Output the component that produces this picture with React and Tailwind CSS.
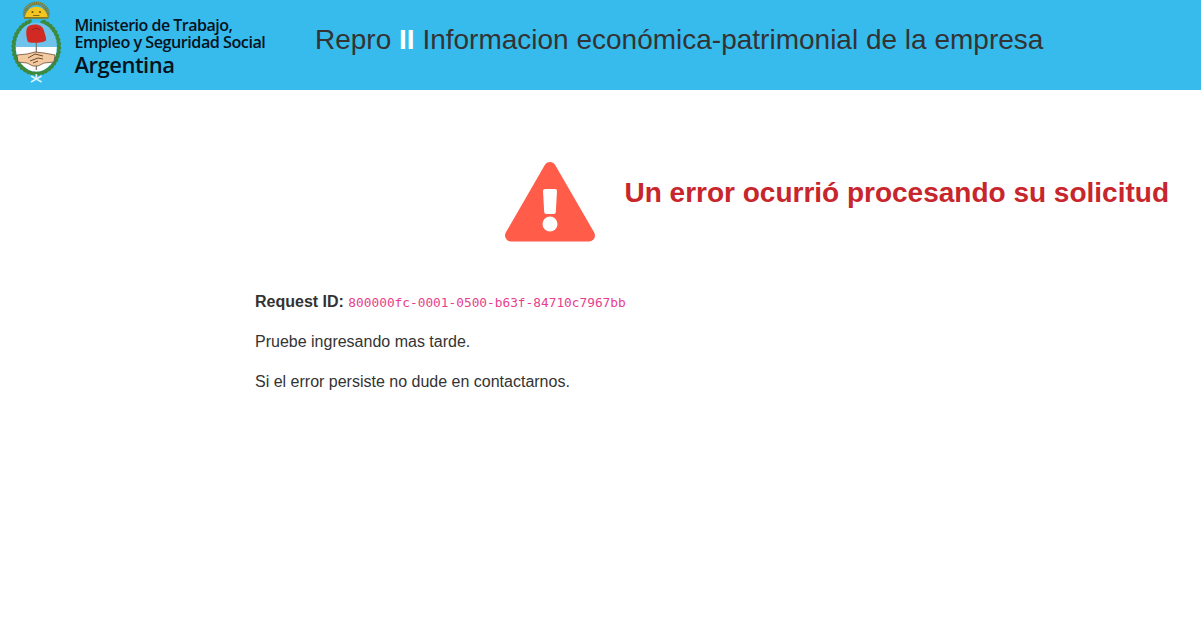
const sans = 'font-["Liberation_Sans",Arial,sans-serif]';

function Escudo() {
  const rays = [];
  for (let i = 0; i < 21; i++) {
    const a = (Math.PI * (i - 1)) / 18 + Math.PI;
    rays.push(
      <line key={i} x1={27.3 + 9 * Math.cos(a)} y1={14 + 9 * Math.sin(a)} x2={27.3 + 13.5 * Math.cos(a)} y2={14 + 12.5 * Math.sin(a)} stroke="#7f7a2e" strokeWidth="1.400" />
    );
  }
  const leaves = [];
  for (let i = 0; i < 40; i++) {
    const a = (2 * Math.PI * i) / 40;
    if (Math.abs(a - Math.PI * 1.5) < 0.3) continue;
    const x = 27.3 + 22.700 * Math.cos(a);
    const y = 47 + 26.500 * Math.sin(a);
    leaves.push(<ellipse key={i} cx={x} cy={y} rx="3" ry="1.800" fill="#3d8a3f" transform={`rotate(${(a * 180) / Math.PI + 60} ${x} ${y})`} />);
  }
  return (
    <svg width="54" height="90" viewBox="0 0 54 90" className="shrink-0">
      {rays}
      <path d="M16 18a11.300 11.300 0 0 1 22.600 0z" fill="#f4c51f" />
      <circle cx="23.500" cy="12" r="1.100" fill="#6b5410" />
      <circle cx="31" cy="12" r="1.100" fill="#6b5410" />
      <path d="M24 15.500h6.500" stroke="#6b5410" strokeWidth="0.800" />
      <rect x="15" y="17" width="24.600" height="1.800" fill="#8d7a1f" />
      {leaves}
      <clipPath id="oval"><ellipse cx="27.300" cy="47" rx="20.500" ry="24.500" /></clipPath>
      <g clipPath="url(#oval)">
        <rect x="5" y="20" width="44" height="27" fill="#6fc3ea" />
        <rect x="5" y="47" width="44" height="26" fill="#ffffff" />
      </g>
      <line x1="27.300" y1="40" x2="27.300" y2="70" stroke="#77706a" strokeWidth="1.200" />
      <path d="M19 42c-1.500-4-2.500-10-1-14 2-3.500 8-4 11.500-3 3.500 1 5.500 4 6 7.500 .5 2.500 2 5 1.500 8-3 2.500-14 3-18 1.500z" fill="#d12a24" />
      <path d="M23 30c2-2 6-2 8 0" stroke="#8e1a17" strokeWidth="0.800" fill="none" />
      <path d="M8 55l10-1 8-2 9 1 11 2-1 7-10 1-6 3-5 0-6-3-9-1z" fill="#f3c9a0" stroke="#5b3a22" strokeWidth="0.700" />
      <path d="M19 58l7-4 8 2M21 61l8-3 5 1M24 63l5-2" stroke="#5b3a22" strokeWidth="0.900" fill="none" />
      <path d="M27.300 74v5M22 76l10.600 6M32.600 76l-10.600 6" stroke="#d9f2fb" strokeWidth="1.500" />
    </svg>
  );
}

export default function App() {
  return (
    <div className={`min-h-[628px] bg-white text-[#333333] ${sans}`}>
      <header className="flex h-[90px] items-center bg-[#37bbed]">
        <div className="ml-[9px] flex items-center">
          <Escudo />
          <div className='mt-[3px] ml-[11.500px] w-[230.500px] font-["Open_Sans",sans-serif] font-semibold tracking-[-0.5px] whitespace-nowrap text-[#06121c]'>
            <div className="text-[16px] leading-[17px]">Ministerio de Trabajo,</div>
            <div className="text-[16.2px] leading-[17px]">Empleo y Seguridad Social</div>
            <div className="text-[22px] leading-[26px]">Argentina</div>
          </div>
        </div>
        <h1 className="mb-[10px] ml-[10px] text-[28px] font-normal">
          Repro <span className="font-bold text-white">II</span> Informacion económica-patrimonial de la empresa
        </h1>
      </header>

      <main>
        <div className="flex justify-end pt-[71px] pr-[32px]">
          <svg width="92" height="82" viewBox="0 0 92 82" className="mr-[28px] shrink-0">
            <path d="M46 7L7 74.500h78z" fill="#ff5c49" stroke="#ff5c49" strokeWidth="12" strokeLinejoin="round" />
            <path d="M41 28h10a2 2 0 0 1 2 2l-1.200 21a2 2 0 0 1-2 2h-7.600a2 2 0 0 1-2-2L39 30a2 2 0 0 1 2-2z" fill="#ffffff" />
            <circle cx="46" cy="63" r="7.500" fill="#ffffff" />
          </svg>
          <h2 className="pt-[15px] text-[28px] leading-[33px] font-bold text-[#c7262c]">
            Un error ocurrió procesando su solicitud
          </h2>
        </div>

        <div className="mt-[47px] ml-[255px] flex flex-col gap-[17px] text-[16px] leading-[23px]">
          <p>
            <strong>Request ID:</strong>{" "}
            <code className='font-["DejaVu_Sans_Mono",monospace] text-[12.8px] leading-none text-[#e83e8c]'>800000fc-0001-0500-b63f-84710c7967bb</code>
          </p>
          <p>Pruebe ingresando mas tarde.</p>
          <p>Si el error persiste no dude en contactarnos.</p>
        </div>
      </main>
    </div>
  );
}
